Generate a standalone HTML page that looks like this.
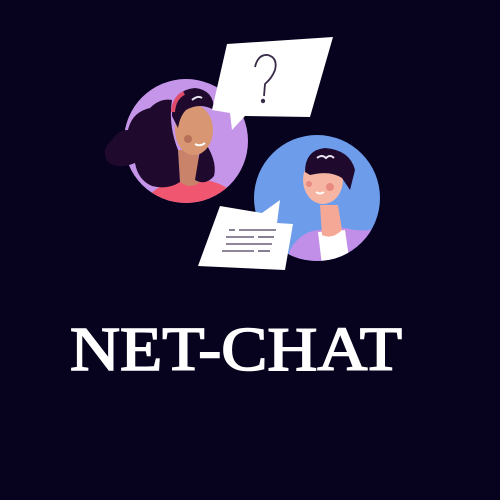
<!DOCTYPE html>
<html><head><style>
html,body{margin:0;padding:0;background:#07021d;width:500px;height:500px;overflow:hidden}
</style></head><body>
<svg width="500" height="500" viewBox="0 0 500 500" xmlns="http://www.w3.org/2000/svg">
<rect width="500" height="500" fill="#07021d"/>
<defs>
<clipPath id="c1"><circle cx="186" cy="141" r="62"/></clipPath>
<clipPath id="c2"><circle cx="317" cy="198" r="63"/></clipPath>
</defs>
<!-- woman -->
<circle cx="186" cy="141" r="62" fill="#c595ea"/>
<g clip-path="url(#c1)">
<path d="M140 210 Q150 185 180 180 L205 180 Q235 185 245 210 Z" fill="#f0566f"/>
<path d="M178 150 L180 182 Q190 190 200 182 L198 150 Z" fill="#c9836a"/>
</g>
<path d="M112 140 Q100 150 108 162 Q118 170 135 163 Q138 180 152 186 Q168 190 180 182 L178 150 Q168 125 172 100 Q160 98 150 108 Q132 112 128 130 Q118 130 112 140 Z" fill="#1f0a2e"/>
<path d="M202 138 Q218 160 214 176 Q206 186 195 180 Z" fill="#1f0a2e"/>
<ellipse cx="194" cy="130" rx="19" ry="25" fill="#d89672"/>
<path d="M172 116 Q172 90 195 88 Q214 90 214 110 Q200 102 186 110 Q180 116 178 128 Z" fill="#1f0a2e"/>
<path d="M173 112 Q174 98 184 93" stroke="#e04b6a" stroke-width="4" fill="none"/>
<path d="M192 100 Q198 95 202 98" stroke="#e8e4f0" stroke-width="2" fill="none"/>
<circle cx="188" cy="139" r="4" fill="#b8705a"/>
<path d="M195 144 Q200 147 205 143" stroke="#fff" stroke-width="2" fill="none"/>
<!-- man -->
<circle cx="317" cy="198" r="63" fill="#6d9ceb"/>
<g clip-path="url(#c2)">
<path d="M290 250 Q300 232 318 230 L345 228 Q372 235 385 222 L390 270 L285 270 Z" fill="#c28fe8"/>
<path d="M318 232 L345 230 L350 265 L322 265 Z" fill="#fff"/>
<path d="M320 205 L322 235 Q332 240 342 230 L338 205 Z" fill="#f6a896"/>
</g>
<ellipse cx="323" cy="180" rx="20" ry="24" fill="#f6b5a2"/>
<path d="M305 172 Q305 150 325 148 Q350 150 355 170 L350 190 L342 178 Q330 170 310 175 Z" fill="#1f0a2e"/>
<path d="M317 158 Q322 154 326 158 Q330 154 334 158" stroke="#e8e4f0" stroke-width="2" fill="none"/>
<circle cx="330" cy="187" r="4" fill="#e98a80"/>
<circle cx="309" cy="184" r="3" fill="#e98a80"/>
<path d="M316 192 Q320 195 324 192" stroke="#fff" stroke-width="2" fill="none"/>
<!-- question bubble -->
<path d="M227 44 L333 37 L310 117 L245 116 L232 130 L230 113 L212 110 Z" fill="#fff"/>
<path d="M255 67 Q258 54 268 55 Q278 58 275 70 Q272 78 265 84 L264 96" stroke="#3a2d4a" stroke-width="1.8" fill="none"/>
<circle cx="263" cy="101" r="2.2" fill="#3a2d4a"/>
<!-- note bubble -->
<path d="M220 206 L262 213 L280 200 L277 223 L293 224 L285 270 L198 266 Z" fill="#fff"/>
<g stroke="#6b5e78" stroke-width="1.6">
<line x1="229" y1="230" x2="235" y2="230"/><line x1="239" y1="230" x2="276" y2="230"/>
<line x1="226" y1="237" x2="254" y2="237"/><line x1="258" y1="237" x2="274" y2="237"/>
<line x1="226" y1="244" x2="272" y2="244"/>
<line x1="222" y1="251" x2="254" y2="251"/><line x1="258" y1="251" x2="270" y2="251"/>
</g>
<text x="70" y="370" textLength="332" lengthAdjust="spacingAndGlyphs" font-family="Liberation Serif, serif" font-size="62" fill="#fff" stroke="#fff" stroke-width="1.6">NET-CHAT</text>
</svg>
</body></html>
